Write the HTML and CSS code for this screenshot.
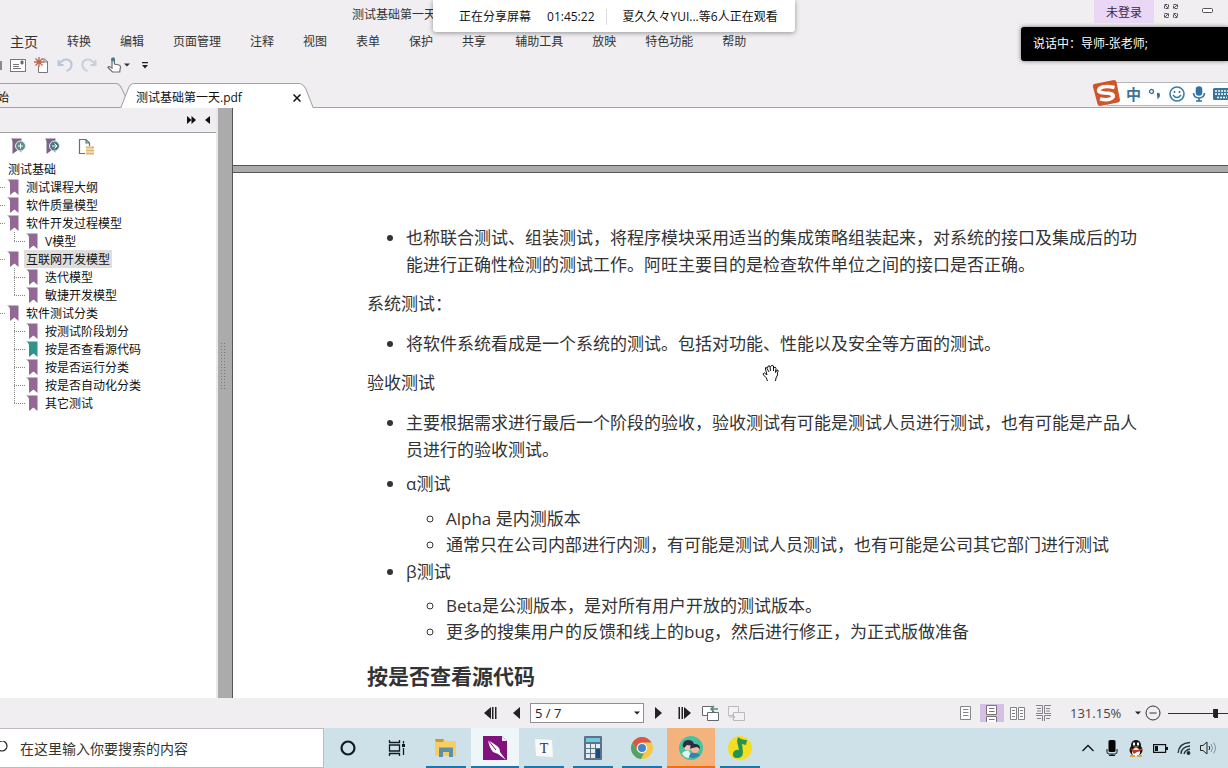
FILE: index.html
```html
<!DOCTYPE html>
<html lang="zh-CN">
<head>
<meta charset="utf-8">
<title>测试基础第一天.pdf</title>
<link rel="stylesheet" href="styles.css">
</head>
<body>
<svg class="defs" aria-hidden="true">
  <symbol id="bookmark" viewBox="0 0 12 17"><path d="M0 .5h11.500V16L7.500 12.500 3 16V5Q3 1.500 0 .5z" fill="currentColor"/></symbol>
  <symbol id="caret" viewBox="0 0 6 4"><path d="M0 .5h6L3 3.500z" fill="currentColor"/></symbol>
</svg>

<header class="app-header">
  <div class="title-row">
    <span class="doc-title">测试基础第一天</span>
    <div class="window-tools">
      <button class="login">未登录</button>
      <button class="win-btn" aria-label="全屏"><svg width="14" height="14" viewBox="0 0 14 14" fill="none" stroke="#55505a"><path d="M.5.5h4v4h-4zM9.500.5h4v4h-4zM.5 9.500h4v4h-4zM9.500 9.500h4v4h-4z" stroke-dasharray="3 1"/><path d="M1 1l3 3M13 1l-3 3M1 13l3-3M13 13l-3-3"/></svg></button>
      <button class="win-btn" aria-label="最小化"><svg width="12" height="6" viewBox="0 0 12 6" fill="#fff" stroke="#55505a"><rect x=".5" y=".5" width="10" height="4" rx="1"/></svg></button>
    </div>
  </div>
  <nav class="menu">
    <button class="menu-home">主页</button><button>转换</button><button>编辑</button><button>页面管理</button><button>注释</button><button>视图</button><button>表单</button><button>保护</button><button>共享</button><button>辅助工具</button><button>放映</button><button>特色功能</button><button>帮助</button>
  </nav>
  <div class="quick">
    <span class="cut-icon"></span>
    <button aria-label="邮件"><svg width="16" height="13" viewBox="0 0 16 13" fill="none" stroke="#77777c"><rect x=".5" y=".5" width="15" height="12" fill="#fff"/><path d="M3 5.500h6M3 7.500h6M3 9.500h8"/><path d="M11 2h2v3h-2z" fill="#555"/></svg></button>
    <button aria-label="新建"><svg width="15" height="16" viewBox="0 0 15 16" fill="none" stroke="#77777c"><path d="M4.500 9v6.500h9V4.500L10.500 2H8" fill="#fff"/><path d="M10 2v3h3.500"/><path d="M5 0v10M0 5h10M1.500 1.500l7 7M8.500 1.500l-7 7" stroke="#c0654b" stroke-width="1.300"/></svg></button>
    <button aria-label="撤销"><svg width="16" height="16" viewBox="0 0 16 16" fill="none" stroke="#b9c5d8" stroke-width="2"><path d="M1.500 3v5h5M2 7.500Q5 2 10 2.500q5 1 4.500 6-.5 4-5 5.500"/></svg></button>
    <button aria-label="重做"><svg width="16" height="16" viewBox="0 0 16 16" fill="none" stroke="#c5d0dc" stroke-width="2"><path d="M14.500 3v5h-5M14 7.500Q11 2 6 2.500q-5 1-4.500 6 .5 4 5 5.500"/></svg></button>
    <button class="hand-tool" aria-label="手形工具"><svg width="15" height="16" viewBox="0 0 15 16" fill="#fff" stroke="#6d6d73" stroke-width="1.200"><path d="M5 11V2.500Q5 1 6.200 1t1.200 1.500V7l4.600 1q1.500.5 1.500 2l-.8 5H5.500L1 10.500Q1.500 8.500 5 11z"/><circle cx="6" cy="2.500" r="2" fill="#457e88" stroke="none"/></svg><svg width="6" height="4"><use href="#caret"/></svg></button>
    <button class="more" aria-label="更多"><svg width="6" height="7" viewBox="0 0 6 7"><path d="M0 0h6v1.200H0zM0 3h6L3 6.500z" fill="#222"/></svg></button>
  </div>
  <div class="tabs">
    <button class="tab tab-start"><svg class="tab-shape" viewBox="0 0 126 24" preserveAspectRatio="none"><path d="M-2 .5H116Q120 1 122 6L126 14" fill="none" stroke="#a3a1a5"/></svg><span>始</span></button>
    <div class="tab tab-active"><svg class="tab-shape" viewBox="0 0 194 24" preserveAspectRatio="none"><path d="M.5 24.500 8 6Q10 .5 14 .5H179Q183 .5 186 6L193.500 24.500" fill="#fff" stroke="#a3a1a5"/></svg><span>测试基础第一天.pdf</span><button class="tab-close" aria-label="关闭"><svg width="8" height="8" viewBox="0 0 8 8" stroke="#111" stroke-width="1.500"><path d="M.5.5l7 7M7.500.5l-7 7"/></svg></button></div>
  </div>
</header>

<div class="share-bar"><span>正在分享屏幕</span><time>01:45:22</time><i></i><span>夏久久々YUI...等6人正在观看</span></div>
<div class="speaker-bar">说话中：导师-张老师;</div>
<div class="ime">
  <svg class="ime-logo" width="30" height="28" viewBox="0 0 30 28"><path d="M3 5 23 1q2 0 2.500 2L29 21q0 2-2 2.500L9 27q-2 0-2.500-2L2 8Q1.500 5.500 3 5z" fill="#d2542b"/><path d="M23.500 8.500Q13 6 8.500 9.500q-3 4 5 4.500 10 0 8.500 4Q19 22 9 20" fill="none" stroke="#fff" stroke-width="3.600"/></svg>
  <div class="ime-body">
    <b>中</b>
    <svg width="14" height="14" viewBox="0 0 14 14"><circle cx="3.500" cy="4.500" r="2" fill="none" stroke="#3a7496" stroke-width="1.300"/><path d="M9 6q3-1 3 2 0 3-3 4 1-2 0-3z" fill="#3a7496"/></svg>
    <svg width="16" height="16" viewBox="0 0 16 16" fill="none" stroke="#3a7ba2" stroke-width="1.600"><circle cx="8" cy="8" r="7"/><path d="M5.500 5v2M10.500 5v2M4 9q4 5 8 0"/></svg>
    <svg width="14" height="16" viewBox="0 0 14 16" fill="none" stroke="#2d73a6" stroke-width="1.600"><rect x="4.500" y="1" width="5" height="8" rx="2.500" fill="#2d73a6"/><path d="M1.500 7q.5 5 5.500 5t5.500-5M7 12v3M4 15h6"/></svg>
    <svg width="18" height="12" viewBox="0 0 18 12"><rect width="18" height="12" rx="1.500" fill="#3a7496"/><path d="M2 3h14M2 6h14M4 9.500h10" stroke="#fff" stroke-width="1.600" stroke-dasharray="2 1"/></svg>
  </div>
</div>

<main class="workspace">
  <aside class="sidebar">
    <div class="side-head">
      <button aria-label="展开"><svg width="9" height="8" viewBox="0 0 9 8"><path d="M0 0l4.500 4L0 8zM4.500 0 9 4 4.500 8z" fill="#111"/></svg></button>
      <button aria-label="收起"><svg width="5" height="8" viewBox="0 0 5 8"><path d="M5 0v8L0 4z" fill="#111"/></svg></button>
    </div>
    <div class="side-tools">
      <button aria-label="添加书签"><svg width="16" height="17" viewBox="0 0 16 17"><path d="M1 .5h10.500v14L8 12l-5.500 4V4Q2.500 1.500 1 .5z" fill="#7d6186"/><circle cx="10.500" cy="8" r="5" fill="#5d8f88" stroke="#e9f2ef"/><path d="M8 8h5M10.500 5.500v5" stroke="#fff"/></svg></button>
      <button aria-label="转到书签"><svg width="16" height="17" viewBox="0 0 16 17"><path d="M1 .5h10.500v14L8 12l-5.500 4V4Q2.500 1.500 1 .5z" fill="#7d6186"/><circle cx="10.500" cy="8" r="5" fill="#4d7886" stroke="#e9f2ef"/><path d="M8 8h5M10.500 5.500 13 8l-2.500 2.500" stroke="#fff" fill="none"/></svg></button>
      <button aria-label="书签选项"><svg width="16" height="17" viewBox="0 0 16 17" fill="none"><path d="M7 15.500H1.500V1.500H8L11.500 5v3M8 1.500V5h3.500" stroke="#56777b" stroke-width="1.200"/><path d="M8 9.500h8M8 12.500h8M8 15.500h8" stroke="#dcb666" stroke-width="1.800"/></svg></button>
    </div>
    <div class="tree-root">测试基础</div>
    <ul class="tree">
      <li><a href="#"><svg><use href="#bookmark"/></svg><span>测试课程大纲</span></a></li>
      <li><a href="#"><svg><use href="#bookmark"/></svg><span>软件质量模型</span></a></li>
      <li><a href="#"><svg><use href="#bookmark"/></svg><span>软件开发过程模型</span></a>
        <ul><li><a href="#"><svg><use href="#bookmark"/></svg><span>V模型</span></a></li></ul></li>
      <li><a href="#" class="selected"><svg><use href="#bookmark"/></svg><span>互联网开发模型</span></a>
        <ul><li><a href="#"><svg><use href="#bookmark"/></svg><span>迭代模型</span></a></li>
        <li><a href="#"><svg><use href="#bookmark"/></svg><span>敏捷开发模型</span></a></li></ul></li>
      <li><a href="#"><svg><use href="#bookmark"/></svg><span>软件测试分类</span></a>
        <ul><li><a href="#"><svg><use href="#bookmark"/></svg><span>按测试阶段划分</span></a></li>
        <li><a href="#" class="current"><svg><use href="#bookmark"/></svg><span>按是否查看源代码</span></a></li>
        <li><a href="#"><svg><use href="#bookmark"/></svg><span>按是否运行分类</span></a></li>
        <li><a href="#"><svg><use href="#bookmark"/></svg><span>按是否自动化分类</span></a></li>
        <li><a href="#"><svg><use href="#bookmark"/></svg><span>其它测试</span></a></li></ul></li>
    </ul>
  </aside>
  <div class="splitter"><span class="grip"></span></div>
  <section class="viewer">
    <div class="prev-page"></div>
    <article class="page">
      <ul><li>也称联合测试、组装测试，将程序模块采用适当的集成策略组装起来，对系统的接口及集成后的功能进行正确性检测的测试工作。阿旺主要目的是检查软件单位之间的接口是否正确。</li></ul>
      <p>系统测试：</p>
      <ul><li>将软件系统看成是一个系统的测试。包括对功能、性能以及安全等方面的测试。</li></ul>
      <p>验收测试</p>
      <ul>
        <li>主要根据需求进行最后一个阶段的验收，验收测试有可能是测试人员进行测试，也有可能是产品人员进行的验收测试。</li>
        <li class="spaced">α测试
          <ul><li>Alpha 是内测版本</li><li>通常只在公司内部进行内测，有可能是测试人员测试，也有可能是公司其它部门进行测试</li></ul></li>
        <li>β测试
          <ul><li>Beta是公测版本，是对所有用户开放的测试版本。</li><li>更多的搜集用户的反馈和线上的bug，然后进行修正，为正式版做准备</li></ul></li>
      </ul>
      <h2>按是否查看源代码</h2>
    </article>
    <svg class="cursor" width="18" height="18" viewBox="0 0 18 18"><path d="M5.500 17Q5 13.500 1.500 11 .5 9 2.500 9L5 11 3.500 5Q3 3 4.500 3.500L7 8M5.500 4Q5.500 1 8 2L8.500 7M8.500 2.500Q10 .5 11.500 2L11.500 7M12 3.500Q14 2.500 14 4.500L13.500 8.500 15 6q1.500-.5 1 1.500Q15 9 15.500 11 13.500 14 13.500 17" fill="#fff" stroke="#111"/></svg>
  </section>
</main>

<div class="status">
  <div class="pager">
    <button aria-label="首页"><svg width="13" height="12" viewBox="0 0 13 12"><path d="M7 0v12L0 6zM8 0h1.500v12H8zM11 0h1.500v12H11z" fill="#222"/></svg></button>
    <button aria-label="上一页"><svg width="7" height="12" viewBox="0 0 7 12"><path d="M7 0v12L0 6z" fill="#222"/></svg></button>
    <label class="page-select"><select aria-label="页码"><option>5 / 7</option></select><svg width="6" height="4"><use href="#caret"/></svg></label>
    <button aria-label="下一页"><svg width="7" height="12" viewBox="0 0 7 12"><path d="M0 0v12l7-6z" fill="#222"/></svg></button>
    <button aria-label="末页"><svg width="13" height="12" viewBox="0 0 13 12"><path d="M6 0v12l7-6zM3.500 0H5v12H3.500zM.5 0H2v12H.5z" fill="#222"/></svg></button>
    <button aria-label="后退视图"><svg width="17" height="16" viewBox="0 0 17 16" fill="#fff" stroke="#66666c"><path d="M.5 1.500h10v9H.5z"/><path d="M5.500 7.500h11v8h-11z"/><path d="M16 4H9M12 1 9 4l3 3" fill="none" stroke="#4f8b78" stroke-width="1.500"/></svg></button>
    <button aria-label="前进视图"><svg width="17" height="16" viewBox="0 0 17 16" fill="#f3f1f4" stroke="#bbb9bf"><path d="M.5 1.500h10v9H.5z"/><path d="M5.500 7.500h11v8h-11z"/><path d="M1 12h6M4.500 9.500 7 12l-2.500 2.500" fill="none"/></svg></button>
  </div>
  <div class="view-tools">
    <button class="view" aria-label="单页"><svg width="12" height="14" viewBox="0 0 12 14" fill="#fff" stroke="#85838a"><path d="M.5.5h10v13H.5zM3 3.500h5.500M3 6.500h5.500M3 9.500h5.500"/></svg></button>
    <button class="view active" aria-label="连续"><svg width="12" height="18" viewBox="0 0 12 18" fill="#fff" stroke="#77737d"><path d="M.5 1.500h10v9H.5zM3 4.500h5.500M3 7.500h5.500M.5 18v-5.500h10V18M3 15.500h5.500"/></svg></button>
    <button class="view" aria-label="双页"><svg width="16" height="13" viewBox="0 0 16 13" fill="#fff" stroke="#85838a"><path d="M.5.5h6v12h-6zM8.500.5h6v12h-6zM2 3.500h3M2 6.500h3M2 9.500h3M10 3.500h3M10 6.500h3M10 9.500h3"/></svg></button>
    <button class="view" aria-label="双页连续"><svg width="16" height="16" viewBox="0 0 16 16" fill="none" stroke="#85838a"><path d="M0 .5h6.500v8H0M15 .5H8.500v8H15M0 10.500h6.500V16M15 10.500H8.500V16M1 3.500h4M1 6h4M10 3.500h4M10 6h4M1 13.500h4M10 13.500h4"/></svg></button>
    <span class="percent">131.15%</span>
    <button class="percent-menu" aria-label="缩放比例"><svg width="6" height="4"><use href="#caret"/></svg></button>
    <button class="zoom-out" aria-label="缩小"><svg width="16" height="16" viewBox="0 0 16 16" fill="none" stroke="#333"><circle cx="8" cy="8" r="7"/><path d="M4.500 8h7"/></svg></button>
    <div class="zoom-track"><input type="range" min="0" max="100" value="50" aria-label="缩放"></div>
  </div>
</div>

<footer class="taskbar">
  <label class="search"><svg width="8" height="14" viewBox="0 0 8 14" fill="none" stroke="#222" stroke-width="1.200"><circle cx="2" cy="5" r="5"/></svg><input type="text" placeholder="在这里输入你要搜索的内容" aria-label="搜索"></label>
  <div class="apps">
    <button aria-label="Cortana"><svg width="16" height="16" viewBox="0 0 16 16"><circle cx="8" cy="8" r="6.500" fill="none" stroke="#111b24" stroke-width="2.200"/></svg></button>
    <button aria-label="任务视图"><svg width="18" height="16" viewBox="0 0 18 16" fill="none" stroke="#111b24" stroke-width="1.300"><path d="M1.500 0v2.500h10V0M1.500 5h10v6h-10zM1.500 16v-2.500h10V16M15.500 1v2.500M15.500 8v7"/><path d="M15.500 4v3" stroke-width="3"/></svg></button>
    <button class="open" aria-label="文件资源管理器"><svg width="24" height="20" viewBox="0 0 24 20"><path d="M1 1h9l2 2h10v15H1z" fill="#f7ce61"/><path d="M1 1h9l-1 3H2z" fill="#c79b35"/><path d="M5 19V9.500h14V19h-4v-5H9v5z" fill="#5b8faa"/></svg></button>
    <button class="open focus" aria-label="PDF 编辑器"><svg width="24" height="24" viewBox="0 0 24 24"><path d="M0 0h19l5 5v19H0z" fill="#81127c"/><path d="M19 0v5h5z" fill="#f5edf8"/><path d="M5 4q1 7 5 12l5 2 8 6-6-8q0-4-3-6Q10 7 5 4z" fill="#fff"/><path d="M5 4l8 10" stroke="#81127c"/></svg></button>
    <button class="open" aria-label="Typora"><svg width="20" height="20" viewBox="0 0 20 20"><path d="M1 1l17 1 1 17-17-1z" fill="#f9f9f8"/><text x="10" y="15" text-anchor="middle" class="t-glyph">T</text></svg></button>
    <button class="open" aria-label="计算器"><svg width="18" height="24" viewBox="0 0 18 24"><rect width="18" height="24" rx="1" fill="#5d7387"/><path d="M2 2h14v4H2z" fill="#70c9df"/><path d="M2 8h4v4H2zM7 8h4v4H7zM12 8h4v4h-4zM2 13h4v4H2zM7 13h4v4H7zM2 18h4v4H2zM7 18h4v4H7z" fill="#e7eef2"/><path d="M12 13h4v9h-4z" fill="#194b85"/></svg></button>
    <button class="open" aria-label="Chrome"><svg width="22" height="22" viewBox="0 0 22 22"><circle cx="11" cy="11" r="11" fill="#f2c84d"/><path d="M1.500 5.500A11 11 0 0 1 20.500 5.500H11A5.500 5.500 0 0 0 6.200 13.700z" fill="#d9574a"/><path d="M1.500 5.500 6.200 13.700A5.500 5.500 0 0 0 13 16L10 22A11 11 0 0 1 1.500 5.500z" fill="#4fa567"/><circle cx="11" cy="11" r="5" fill="#fff"/><circle cx="11" cy="11" r="4" fill="#4383ce"/></svg></button>
    <button class="open alert" aria-label="课堂"><svg width="24" height="24" viewBox="0 0 24 24"><circle cx="12" cy="12" r="12" fill="#43c3a3"/><circle cx="9" cy="10" r="4.500" fill="#f3c5ac"/><path d="M3.500 10Q4 4 9 4t6 4l-1 2-6-1-3 3z" fill="#342c3d"/><path d="M3 18q2-4 7-3l2 5-3 2q-4-1-6-4z" fill="#e9f3f2"/><circle cx="16" cy="13" r="4" fill="#f3b99e"/><path d="M11 13q0-5 5-5t5 5l-3-2-5 1z" fill="#2b293a"/><path d="M10 21q1-5 6-4 4 0 5 2-5 5-11 2z" fill="#3682b2"/></svg></button>
    <button class="open" aria-label="QQ音乐"><svg width="24" height="24" viewBox="0 0 24 24"><circle cx="12" cy="12" r="12" fill="#f5de22"/><path d="M10 1q3 3 9 3l-1 5-4-1 1 8q0 6-6 6-5 0-4-5 2-4 6-3L9 5z" fill="#259354"/></svg></button>
  </div>
  <div class="tray">
    <button aria-label="显示隐藏的图标"><svg width="12" height="8" viewBox="0 0 12 8" fill="none" stroke="#111" stroke-width="1.300"><path d="M.5 7 6 1.500 11.500 7"/></svg></button>
    <button aria-label="麦克风"><svg width="12" height="16" viewBox="0 0 12 16"><rect x="2.500" width="7" height="12" rx="1.500" fill="#050505"/><path d="M1 9v3q0 2 2 2h6q2 0 2-2V9M6 14v2M3 15.500h6" fill="none" stroke="#111"/></svg></button>
    <button aria-label="QQ"><svg width="16" height="17" viewBox="0 0 16 17"><ellipse cx="8" cy="10" rx="6.500" ry="6" fill="#141414"/><circle cx="8" cy="5" r="5" fill="#141414"/><ellipse cx="8" cy="12" rx="4" ry="4" fill="#fff"/><path d="M2 8q6 4 12 0v2q-3 2-5 2l-3 2-2-3z" fill="#c9322d"/><ellipse cx="6" cy="4" rx="1.200" ry="1.700" fill="#fff"/><ellipse cx="10" cy="4" rx="1.200" ry="1.700" fill="#fff"/><path d="M5 6.500h6L8 8zM2 15h5v2H2zM9 15h5v2H9z" fill="#e0a33d"/></svg></button>
    <button aria-label="电池"><svg width="15" height="9" viewBox="0 0 15 9"><rect x=".6" y=".6" width="12" height="7.800" fill="none" stroke="#111" stroke-width="1.200"/><path d="M2 2h3v5H2zM13 3h2v3h-2z" fill="#111"/></svg></button>
    <button aria-label="网络"><svg width="14" height="14" viewBox="0 0 14 14" fill="none" stroke="#26333c" stroke-width="1.300"><path d="M1 12Q2 2 13 1.500M4 13q0-7 9-8M7 13q1-4 6-5"/><circle cx="11.500" cy="12" r="1.300" fill="#111"/></svg></button>
    <button aria-label="音量"><svg width="17" height="14" viewBox="0 0 17 14" fill="none" stroke="#222"><path d="M.5 4.500H3L7 1v12L3 9.500H.5zM9 5q1.500 2 0 4"/><path d="M11 3q3 4 0 8M13.500 1.500q4 5.500 0 11" stroke="#83949b"/></svg></button>
  </div>
</footer>
</body>
</html>
```
FILE: styles.css
```css
* { box-sizing: border-box; }
body {
  margin: 0;
  height: 100vh;
  display: flex;
  flex-direction: column;
  position: relative;
  overflow: hidden;
  background: #f0eef1;
  color: #222;
  font: 12px/18px "Open Sans", "Noto Sans CJK SC", sans-serif;
}
button {
  border: 0;
  padding: 0;
  background: none;
  color: inherit;
  font: inherit;
  display: flex;
  align-items: center;
  justify-content: center;
  flex: none;
}
svg { display: block; flex: none; }
ul { margin: 0; padding: 0; list-style: none; }
.defs { position: absolute; width: 0; height: 0; }

/* header */
.app-header { flex: none; border-bottom: 1px solid #a3a1a5; color: #333; }
.title-row { height: 28px; display: flex; align-items: center; justify-content: space-between; padding-left: 352px; }
.doc-title { padding-top: 2px; }
.window-tools { display: flex; align-self: stretch; align-items: flex-start; padding-right: 14px; gap: 10px; }
.login { width: 60px; height: 23px; padding-top: 2px; background: #e9d7f5; color: #3b2547; }
.win-btn { height: 22px; }
.window-tools .win-btn:last-child { margin-left: 14px; }
.menu { display: flex; align-items: center; gap: 29px; height: 26px; padding: 2px 0 0 10px; }
.menu-home { font-size: 14px; }
.quick { display: flex; align-items: center; height: 22px; gap: 8px; }
.cut-icon { width: 2px; height: 9px; background: #8a8a8d; }
.quick .hand-tool { gap: 2px; margin-left: 2px; }
.quick .more { margin-left: 4px; }
.tabs { display: flex; height: 31px; padding-top: 7px; }
.tab { position: relative; display: flex; align-items: center; justify-content: flex-start; height: 24px; }
.tab > span { position: relative; padding-top: 6px; color: #111; }
.tab-start { width: 126px; margin-right: -6px; }
.tab-start > span { margin-left: -3px; }
.tab-active { width: 194px; padding: 0 13px 0 16px; justify-content: space-between; }
.tab-shape { position: absolute; inset: 0; width: 100%; height: 25px; }
.tab-close { position: relative; padding: 6px 0 0; }

/* floating bars */
.share-bar {
  position: absolute; top: 0; left: 433px; height: 32px;
  display: flex; align-items: center; gap: 16px; padding: 1px 17px 0 26px;
  background: #fff; color: #111; border-radius: 0 0 3px 3px;
  box-shadow: 0 1px 5px #0006; white-space: nowrap;
}
.share-bar i { width: 1px; height: 16px; background: #ddd; margin-left: -5px; }
.speaker-bar {
  position: absolute; top: 27px; right: 0; width: 207px; height: 34px;
  padding: 8px 12px; background: #000; color: #fff;
  border-radius: 3px 0 0 3px; box-shadow: 0 0 4px #0008;
}
.ime { position: absolute; top: 79px; right: -10px; display: flex; align-items: center; }
.ime-logo { position: relative; z-index: 1; margin-right: -14px; }
.ime-body { display: flex; align-items: center; gap: 7px; height: 24px; padding: 0 6px 0 18px; background: #fff; border: 1px solid #b3b6ba; margin-top: 2px; }
.ime-body b { font-size: 15px; color: #3a7496; }

/* workspace */
.workspace { flex: 1; min-height: 0; display: flex; }
.sidebar { width: 218px; flex: none; background: #fff; border-right: 2px solid #e9e7ea; color: #111; }
.side-head { height: 25px; display: flex; align-items: center; justify-content: flex-end; gap: 9px; padding-right: 6px; background: #f0eef1; border-bottom: 1px solid #a3a1a5; }
.side-tools { display: flex; gap: 18px; height: 27px; align-items: center; padding-left: 10px; }
.tree-root { height: 18px; line-height: 20px; padding-left: 8px; }
.tree a { display: flex; align-items: center; height: 18px; color: inherit; text-decoration: none; }
.tree a::before { content: ""; width: 5px; border-top: 1px dotted #888; margin-right: 2px; }
.tree a svg { width: 12px; height: 17px; margin-right: 5px; color: #946894; }
.tree a span { height: 18px; line-height: 20px; padding: 0 2px; }
.tree .selected span { background: #dedede; }
.tree .current svg { color: #32938b; }
.tree ul li { margin-left: 14px; background: repeating-linear-gradient(#888 0 1px, transparent 1px 2px) 0 0 / 1px 18px no-repeat; }
.tree ul li:last-child { background-size: 1px 9px; }
.tree ul a::before { width: 11px; margin-right: 1px; }
.splitter { width: 15px; flex: none; background: #ababab; border-right: 1px solid #555; display: flex; align-items: center; padding: 0 3px; }
.grip { width: 5px; height: 46px; margin-bottom: 74px; background: repeating-linear-gradient(#777 0 1px, transparent 1px 3px) 0 0 / 1px 100%, repeating-linear-gradient(#777 0 1px, transparent 1px 3px) 3px 0 / 1px 100%; background-repeat: no-repeat; }
.viewer { flex: 1; min-width: 0; position: relative; display: flex; flex-direction: column; gap: 6px; background: #ababab; overflow: hidden; }
.prev-page { flex: none; height: 58px; background: #fff; border-bottom: 1px solid #555; }
.page { flex: 1; min-height: 0; background: #fff; border-top: 1px solid #555; padding: 51px 84px 0 134px; font-size: 17px; line-height: 27px; color: #333; }
.page > ul { padding-left: 39px; list-style: disc; max-width: 780px; }
.page p { margin: 12px 0 13px; }
.page .spaced { margin-top: 7px; }
.page li ul { padding-left: 40px; padding-top: 8px; line-height: 26px; list-style: circle; }
.page .spaced ul { padding-top: 9px; }
.page h2 { font-size: 21px; line-height: 30px; margin: 16px 0 0; }
.cursor { position: absolute; left: 529px; top: 256px; }

/* status bar */
.status { flex: none; height: 30px; display: grid; grid-template-columns: 1fr auto 1fr; align-items: center; }
.pager { grid-column: 2; display: flex; align-items: center; gap: 2px; padding-right: 2px; }
.pager button { width: 24px; }
.page-select { display: grid; align-items: center; }
.page-select select { grid-area: 1 / 1; appearance: none; width: 114px; height: 20px; border: 1px solid #929095; border-radius: 0; padding: 0 4px; background: #fff; color: #222; font: 13px/18px "Open Sans", sans-serif; }
.page-select svg { grid-area: 1 / 1; justify-self: end; margin-right: 4px; pointer-events: none; }
.view-tools { grid-column: 3; display: flex; align-items: center; justify-content: flex-end; min-width: 0; }
.view { width: 24px; height: 18px; margin-right: 2px; }
.view.active { background: #d5c0e4; }
.percent { font-size: 13px; width: 65px; padding-left: 12px; white-space: nowrap; color: #444; }
.percent-menu { margin-left: 12px; }
.zoom-out { margin: 0 7px 0 4px; }
.zoom-track { width: 60px; overflow: hidden; }
.zoom-track input { display: block; width: 96px; height: 18px; margin: 0; appearance: none; background: linear-gradient(#333, #333) 0 9px / 100% 1px no-repeat, linear-gradient(#333, #333) 45px 5px / 1px 8px no-repeat; }
.zoom-track input::-webkit-slider-thumb { appearance: none; width: 4px; height: 9px; background: #222; }

/* taskbar */
.taskbar { flex: none; height: 40px; display: flex; background: #cfe1e8; }
.search { width: 324px; flex: none; display: flex; align-items: center; background: #fff; border: 1px solid #bcbcbc; border-left: 0; }
.search input { flex: 1; min-width: 0; border: 0; padding: 2px 12px 0; background: none; font: 14px/20px "Open Sans", "Noto Sans CJK SC", sans-serif; }
.search input::placeholder { color: #333; opacity: 1; }
.apps { display: flex; gap: 1px; }
.apps button { width: 48px; }
.apps .open { background: linear-gradient(#1878b4, #1878b4) center bottom / 40px 2px no-repeat; }
.apps .open.focus { background: linear-gradient(#1878b4, #1878b4) center bottom / 48px 2px no-repeat #eef6f9; }
.apps .open.alert { background: linear-gradient(#f0700d, #f0700d) center bottom / 48px 2px no-repeat #f4b27c; }
.t-glyph { font: 14px "Liberation Serif", serif; fill: #333; }
.tray { margin-left: auto; display: flex; padding-right: 8px; }
.tray button { width: 24px; }
```
